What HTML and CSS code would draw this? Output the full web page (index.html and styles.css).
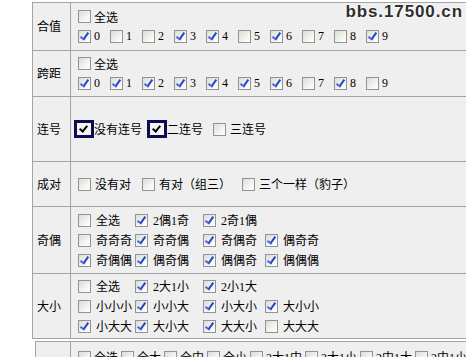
FILE: index.html
```html
<!DOCTYPE html>
<html>
<head>
<meta charset="utf-8">
<link rel="stylesheet" href="styles.css">
</head>
<body>
<div class="wm">bbs.17500.cn</div>
<div class="page">
<table class="grid">
  <tr class="r1"><th>合值</th><td>
    <div class="line"><span class="it"><span class="cb"></span>全选</span></div>
    <div class="line digits">
      <span class="it"><span class="cb on"></span>0</span>
      <span class="it"><span class="cb"></span>1</span>
      <span class="it"><span class="cb"></span>2</span>
      <span class="it"><span class="cb on"></span>3</span>
      <span class="it"><span class="cb on"></span>4</span>
      <span class="it"><span class="cb"></span>5</span>
      <span class="it"><span class="cb on"></span>6</span>
      <span class="it"><span class="cb"></span>7</span>
      <span class="it"><span class="cb"></span>8</span>
      <span class="it"><span class="cb on"></span>9</span>
    </div>
  </td></tr>
  <tr class="r2"><th>跨距</th><td>
    <div class="line"><span class="it"><span class="cb"></span>全选</span></div>
    <div class="line digits">
      <span class="it"><span class="cb on"></span>0</span>
      <span class="it"><span class="cb on"></span>1</span>
      <span class="it"><span class="cb on"></span>2</span>
      <span class="it"><span class="cb on"></span>3</span>
      <span class="it"><span class="cb on"></span>4</span>
      <span class="it"><span class="cb on"></span>5</span>
      <span class="it"><span class="cb on"></span>6</span>
      <span class="it"><span class="cb"></span>7</span>
      <span class="it"><span class="cb on"></span>8</span>
      <span class="it"><span class="cb"></span>9</span>
    </div>
  </td></tr>
  <tr class="r3"><th>连号</th><td>
    <div class="line flow">
      <span class="it focus"><span class="fb"></span>没有连号</span>
      <span class="it focus"><span class="fb"></span>二连号</span>
      <span class="it"><span class="cb"></span>三连号</span>
    </div>
  </td></tr>
  <tr class="r4"><th>成对</th><td>
    <div class="line flow pairs">
      <span class="it"><span class="cb"></span>没有对</span>
      <span class="it"><span class="cb"></span>有对（组三）</span>
      <span class="it"><span class="cb"></span>三个一样（豹子）</span>
    </div>
  </td></tr>
  <tr class="r5"><th>奇偶</th><td>
    <div class="line cols">
      <span class="it"><span class="cb"></span>全选</span>
      <span class="it"><span class="cb on"></span>2偶1奇</span>
      <span class="it"><span class="cb on"></span>2奇1偶</span>
    </div>
    <div class="line cols">
      <span class="it"><span class="cb"></span>奇奇奇</span>
      <span class="it"><span class="cb on"></span>奇奇偶</span>
      <span class="it"><span class="cb on"></span>奇偶奇</span>
      <span class="it"><span class="cb on"></span>偶奇奇</span>
    </div>
    <div class="line cols">
      <span class="it"><span class="cb on"></span>奇偶偶</span>
      <span class="it"><span class="cb on"></span>偶奇偶</span>
      <span class="it"><span class="cb on"></span>偶偶奇</span>
      <span class="it"><span class="cb on"></span>偶偶偶</span>
    </div>
  </td></tr>
  <tr class="r6"><th>大小</th><td>
    <div class="line cols">
      <span class="it"><span class="cb"></span>全选</span>
      <span class="it"><span class="cb on"></span>2大1小</span>
      <span class="it"><span class="cb on"></span>2小1大</span>
    </div>
    <div class="line cols">
      <span class="it"><span class="cb"></span>小小小</span>
      <span class="it"><span class="cb on"></span>小小大</span>
      <span class="it"><span class="cb on"></span>小大小</span>
      <span class="it"><span class="cb on"></span>大小小</span>
    </div>
    <div class="line cols">
      <span class="it"><span class="cb on"></span>小大大</span>
      <span class="it"><span class="cb on"></span>大小大</span>
      <span class="it"><span class="cb on"></span>大大小</span>
      <span class="it"><span class="cb"></span>大大大</span>
    </div>
  </td></tr>
</table>
<table class="grid grid2">
  <tr class="r7"><th></th><td>
    <div class="line flow tight">
      <span class="it"><span class="cb"></span>全选</span>
      <span class="it"><span class="cb"></span>全大</span>
      <span class="it"><span class="cb"></span>全中</span>
      <span class="it"><span class="cb"></span>全小</span>
      <span class="it"><span class="cb"></span>2大1中</span>
      <span class="it"><span class="cb"></span>2大1小</span>
      <span class="it"><span class="cb"></span>2中1大</span>
      <span class="it"><span class="cb"></span>2中1小</span>
    </div>
  </td></tr>
</table>
</div>
</body>
</html>
```
FILE: styles.css
```css
html, body {
  margin: 0;
  padding: 0;
  background: #ffffff;
  overflow: hidden;
}
body {
  font-family: "Liberation Serif", "Noto Sans CJK SC", serif;
  font-size: 12px;
  color: #000;
  position: relative;
}
.page {
  padding: 2px 0 0 32px;
}
.wm {
  position: absolute;
  top: 2px;
  right: 3px;
  z-index: 5;
  font-family: "Liberation Sans", Arial, sans-serif;
  font-weight: bold;
  font-size: 17px;
  letter-spacing: 0.9px;
  color: #2e2e2e;
  text-shadow: 0 0 2px #fff, 0 0 2px #fff, 0 0 3px #fff;
}
.grid {
  border-collapse: collapse;
  width: 470px;
  background: #efefef;
  border: 1px solid #a4a4a4;
}
.grid th, .grid td {
  border: 1px solid #a4a4a4;
  padding: 0;
  vertical-align: middle;
}
.grid th {
  width: 33px;
  padding-left: 4px;
  padding-bottom: 2px;
  text-align: left;
  font-weight: normal;
  font-family: "Noto Sans CJK SC", sans-serif;
  font-size: 12px;
}
.grid td {
  padding-left: 7px;
}
.r1 { height: 48px; }
.r2 { height: 46px; }
.r3 { height: 65px; }
.r4 { height: 45px; }
.r5 { height: 67px; }
.r6 { height: 65px; }
.grid2 {
  margin: 2px 0 0 3px;
}
.grid2 th { width: 30px; }
.r7 td { vertical-align: top; padding-top: 5px; }
.r7 { height: 30px; }
.line {
  height: 20px;
  display: flex;
  align-items: center;
  white-space: nowrap;
}
.it {
  display: inline-flex;
  align-items: center;
  height: 20px;
}
.cb {
  position: relative;
  display: inline-block;
  box-sizing: border-box;
  width: 13px;
  height: 13px;
  border: 1px solid #8f9496;
  background: linear-gradient(135deg, #dcdcd6 0%, #f4f4f0 60%, #ffffff 100%);
  margin-right: 3px;
  flex: none;
}
.cb.on::after {
  content: "";
  position: absolute;
  left: 3px;
  top: 0px;
  width: 3px;
  height: 7px;
  border-right: 2px solid #2146c8;
  border-bottom: 2px solid #4a68d6;
  transform: rotate(35deg);
}
.digits {
  display: grid;
  grid-template-columns: repeat(10, 32px);
}
.flow .it { margin-right: 11px; }
.flow .it .cb { margin-right: 4px; }
.pairs .it { margin-right: 11px; }
.tight .it { margin-right: 3px; }
.tight .it .cb { margin-right: 3px; }
.focus { margin-right: 9px !important; margin-left: -4px; }
.r3 .flow .it:nth-child(2) { margin-right: 10px !important; }
.fb {
  position: relative;
  display: inline-block;
  box-sizing: border-box;
  width: 20px;
  height: 18px;
  border: 3px solid #0c0c55;
  background: #f4f4f4;
  margin-right: 0;
}
.fb::after {
  content: "";
  position: absolute;
  left: 4px;
  top: 1px;
  width: 3px;
  height: 6px;
  border-right: 2px solid #000;
  border-bottom: 2px solid #000;
  transform: rotate(40deg);
}
.cols {
  display: grid;
  grid-template-columns: 57px 68px 62px auto;
}
.cols .cb { margin-right: 5px; }
```
